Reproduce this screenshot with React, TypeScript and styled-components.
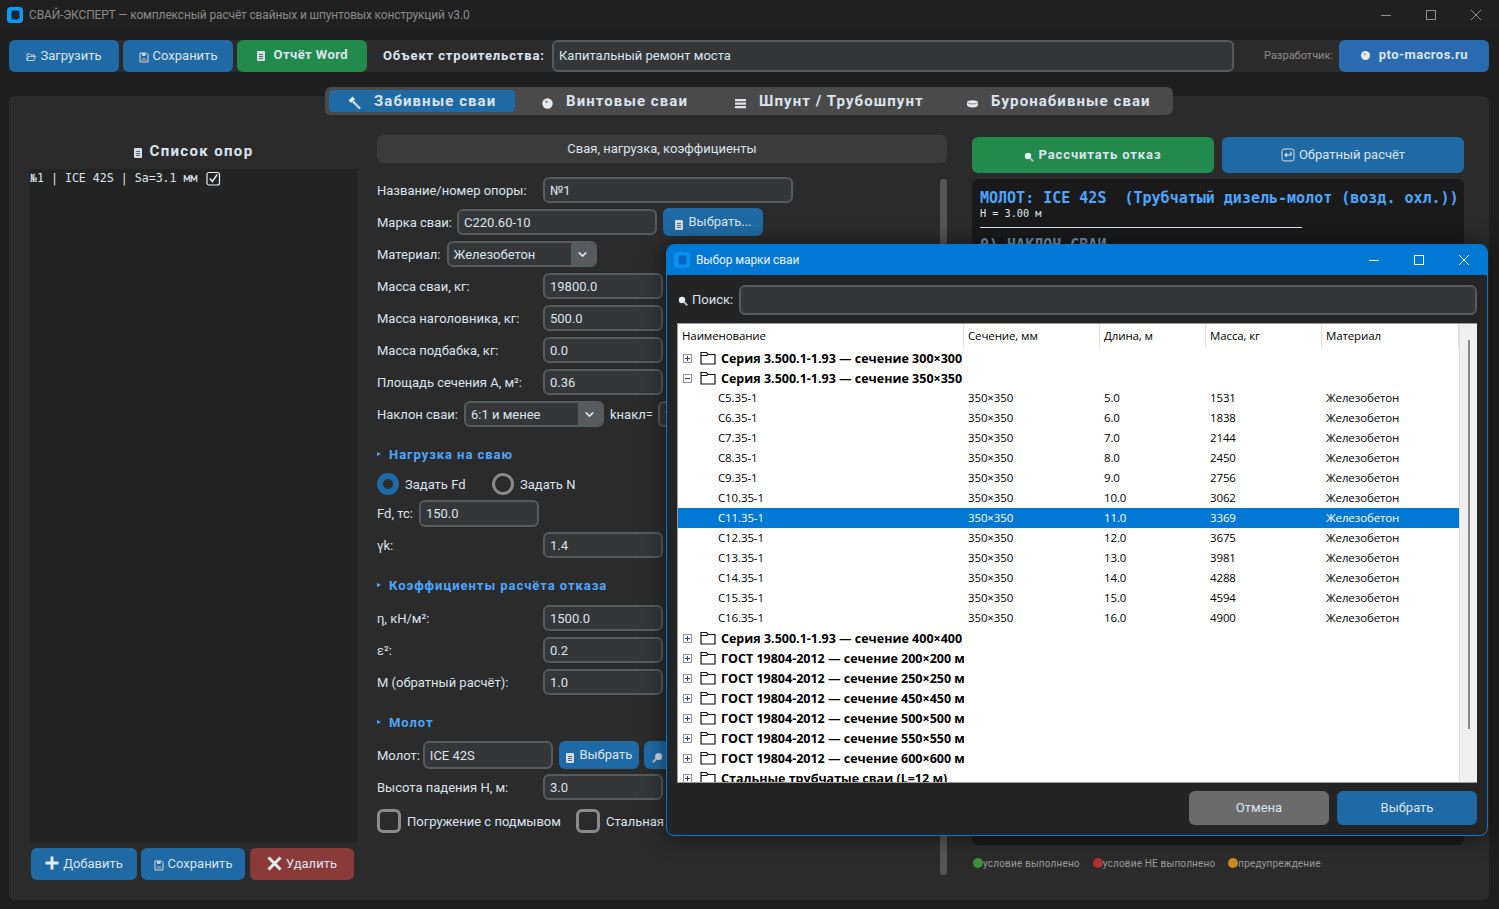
import React from 'react';
import styled, { createGlobalStyle } from 'styled-components';
import { ChevronDown } from 'lucide-react';

const Global = createGlobalStyle`
  html, body { margin: 0; height: 100%; background: #1e1e1e; overflow: hidden; }
  #root { height: 100%; }
  * { box-sizing: border-box; }
`;
const Page = styled.div`
  position: relative; height: 909px; display: flex; flex-direction: column;
  font-family: Roboto, "Liberation Sans", sans-serif; font-size: 13px; color: #dce4ee; background: #1e1e1e;
`;
const TitleBar = styled.div`
  height: 30px; flex: none; background: #202020; display: flex; align-items: center; padding: 0 1px 0 7px;
  color: #8a8a8a; font-size: 12px;
`;
const TitleText = styled.span`flex: 1; margin-left: 6px; white-space: nowrap; letter-spacing: -0.16px; padding-bottom: 1px;`;
const WinBtn = styled.div`
  width: 45px; height: 30px; flex: none; display: flex; align-items: center; justify-content: center;
`;
const Toolbar = styled.div`
  margin: 10px 10px 0 9px; height: 32px; flex: none; background: #2b2b2b; border-radius: 6px;
  display: flex; align-items: center;
`;
const Btn = styled.div<{ $w: number; $bg?: string; $h?: number; $bold?: boolean; $ml?: number; $ls?: number }>`
  width: ${p => p.$w}px; height: ${p => p.$h ?? 32}px; flex: none; margin-left: ${p => p.$ml ?? 0}px;
  background: ${p => p.$bg ?? '#1f6aa5'}; border-radius: 6px; color: #dce4ee;
  display: flex; align-items: center; justify-content: center; gap: 4px; white-space: nowrap; overflow: hidden;
  padding-bottom: ${p => ((p.$h ?? 32) === 28 ? 1 : p.$bold && (p.$h ?? 32) === 32 ? 3 : 2)}px;
  font-weight: ${p => (p.$bold ? 700 : 400)}; letter-spacing: ${p => p.$ls ?? (p.$bold ? 0.45 : 0)}px;
`;
const BoldLabel = styled.span`
  font-weight: 700; letter-spacing: 0.86px; margin-left: 16px; width: 169px; flex: none; white-space: nowrap; padding-bottom: 2px;
`;
const Input = styled.div<{ $w?: number; $h?: number; $flex?: boolean; $pb?: number }>`
  ${p => (p.$flex ? 'flex: 1;' : `width: ${p.$w}px; flex: none;`)}
  height: ${p => p.$h ?? 26}px;
  background: #343638; border: 2px solid #565b5e; border-radius: 6px; padding: 0 5px ${p => p.$pb ?? 0}px;
  display: flex; align-items: center; color: #dce4ee; white-space: nowrap;
`;
const DevLabel = styled.span`
  margin-left: 30px; width: 75px; flex: none; font-size: 11px; color: #8d8d8d; white-space: nowrap; padding-bottom: 1px;
`;
const Pane = styled.div`
  margin: 15px 10px 9px 9px; flex: 1; min-height: 0; position: relative; display: flex; flex-direction: column;
`;
const TabStrip = styled.div`
  align-self: center; width: 848px; height: 28px; margin-bottom: -19px; z-index: 1; flex: none;
  background: #4a4a4a; border-radius: 6px; padding: 3px 4px; display: flex; align-items: center;
`;
const Tab = styled.div<{ $w: number; $on?: boolean; $pl: number }>`
  width: ${p => p.$w}px; height: 22px; flex: none; border-radius: 4px; background: ${p => (p.$on ? '#1f6aa5' : 'transparent')};
  display: flex; align-items: center; padding-left: ${p => p.$pl}px; white-space: nowrap;
  font-size: 15px; font-weight: 700; letter-spacing: 1.08px; color: #dce4ee;
`;
const TabText = styled.span`margin-left: 12px; padding-bottom: 1px;`;
const Body = styled.div`
  flex: 1; min-height: 0; background: #2b2b2b; border-radius: 6px; padding: 39px 25px 20px 20px; display: flex;
`;
const LeftCol = styled.div`width: 328px; flex: none; display: flex; flex-direction: column;`;
const ListTitle = styled.div`
  height: 34px; flex: none; display: flex; align-items: center; justify-content: center; gap: 7px; padding-bottom: 2px;
  font-size: 15px; font-weight: 700; letter-spacing: 1.35px; color: #dce4ee;
`;
const OpList = styled.div`
  flex: 1; min-height: 0; background: #242424; padding: 0 1px; color: #dce4ee;
  font-family: "DejaVu Sans Mono", monospace; font-size: 11.6px;
`;
const OpRow = styled.div`height: 18px; display: flex; align-items: center; gap: 1px; white-space: pre;`;
const LeftBtns = styled.div`margin-top: 6px; padding-left: 2px; display: flex; gap: 4px; flex: none;`;
const CenterCol = styled.div`width: 570px; flex: none; margin-left: 20px; display: flex; flex-direction: column; min-height: 0;`;
const SecHeader = styled.div`
  height: 28px; flex: none; background: #3b3b3b; border-radius: 6px; display: flex; align-items: center; justify-content: center; padding-bottom: 2px;
`;
const FormWrap = styled.div`flex: 1; min-height: 0; display: flex;`;
const FormBody = styled.div`flex: 1; min-width: 0; overflow: hidden; padding-top: 11px;`;
const ScrollThumb = styled.div`width: 7px; flex: none; margin: 16px 0 5px; background: #555; border-radius: 3px;`;
const Row = styled.div<{ $h?: number; $mt?: number }>`
  height: ${p => p.$h ?? 32}px; margin-top: ${p => p.$mt ?? 0}px; display: flex; align-items: center; white-space: nowrap;
`;
const Label = styled.span<{ $w?: number; $gap?: number; $ml?: number }>`
  flex: none; ${p => (p.$w ? `width: ${p.$w}px;` : `margin-right: ${p.$gap ?? 6}px;`)}
  margin-left: ${p => p.$ml ?? 0}px;
`;
const Select = styled.div<{ $w: number }>`
  width: ${p => p.$w}px; height: 26px; flex: none; background: #343638; border: 2px solid #565b5e; border-radius: 6px;
  display: flex; align-items: center; padding-left: 5px; overflow: hidden;
`;
const SelectText = styled.span`flex: 1;`;
const SelectArrow = styled.span`
  width: 24px; align-self: stretch; background: #565b5e; display: flex; align-items: center; justify-content: center;
`;
const Section = styled.div<{ $mt: number }>`
  height: 24px; margin-top: ${p => p.$mt}px; display: flex; align-items: center; gap: 8px;
  color: #4da6ff; font-weight: 700; letter-spacing: 0.95px;
`;
const Tri = styled.span`
  width: 0; height: 0; border-left: 4px solid #4da6ff; border-top: 2.5px solid transparent; border-bottom: 2.5px solid transparent;
`;
const Radio = styled.span<{ $on?: boolean }>`
  width: 22px; height: 22px; flex: none; border-radius: 50%; margin-right: 6px;
  border: ${p => (p.$on ? '6px solid #1f6aa5' : '3px solid #8a8a8a')};
`;
const RadioText = styled.span`width: 87px; flex: none;`;
const Check = styled.span`
  width: 24px; height: 24px; flex: none; border: 3px solid #8a8a8a; border-radius: 6px; margin-right: 6px;
`;
const CheckText = styled.span<{ $w?: number }>`${p => (p.$w ? `width: ${p.$w}px; flex: none;` : '')}`;
const RightCol = styled.div`width: 492px; flex: none; margin-left: 25px; display: flex; flex-direction: column; min-height: 0;`;
const RightBtns = styled.div`margin-top: 2px; display: flex; justify-content: space-between; flex: none;`;
const Output = styled.div`
  margin-top: 6px; height: 666px; flex: none; background: #1a1a1a; border-radius: 6px; padding: 10px 8px;
  font-family: "DejaVu Sans Mono", monospace; overflow: hidden; white-space: pre;
`;
const OutHead = styled.div`font-size: 15px; line-height: 18px; color: #4da6ff; font-weight: 700;`;
const OutSmall = styled.div`font-size: 10.2px; line-height: 13px; color: #dce4ee;`;
const OutRule = styled.div`width: 322px; height: 1px; background: #dce4ee; margin: 7px 0 9px;`;
const OutSub = styled.div`font-size: 15px; line-height: 16px; color: #6f93b5; font-weight: 700;`;
const Legend = styled.div`margin-top: 12px; height: 12px; display: flex; align-items: center; font-size: 10px; color: #9a9a9a; letter-spacing: 0.17px; white-space: nowrap;`;
const Dot = styled.span<{ $c: string; $ml?: number }>`width: 10px; height: 10px; border-radius: 50%; background: ${p => p.$c}; flex: none; margin-left: ${p => p.$ml ?? 0}px;`;

const Dialog = styled.div`
  position: absolute; left: 666px; top: 244px; width: 822px; height: 592px; z-index: 5;
  background: #242424; border: 1px solid #0078d4; border-radius: 8px; display: flex; flex-direction: column;
  box-shadow: 0 0 22px rgba(0,0,0,.5); overflow: hidden;
`;
const DlgTitle = styled.div`
  height: 30px; flex: none; background: #0078d4; display: flex; align-items: center; padding-left: 7px;
  color: #e8f2fb; font-size: 12px;
`;
const DlgTitleText = styled.span`flex: 1; margin-left: 6px; letter-spacing: -0.12px;`;
const DlgControls = styled.div`display: flex; padding-right: 1px;`;
const SearchRow = styled.div`height: 30px; margin: 10px 10px 0 10px; display: flex; align-items: center; flex: none;`;
const SearchLabel = styled.span`width: 62px; flex: none; padding: 0 0 2px 1px; display: flex; align-items: center; gap: 4px; color: #dce4ee;`;
const Tree = styled.div`
  height: 460px; margin: 8px 10px 0 10px; flex: none; background: #fff; border: 1px solid #9a9a9a; border-right: 0;
  display: flex; overflow: hidden;
`;
const TreeInner = styled.div`flex: 1; min-width: 0; overflow: hidden; font-family: "Open Sans", "Noto Sans", sans-serif; font-size: 11.5px; color: #000; letter-spacing: -0.12px;`;
const TreeHead = styled.div`height: 24px; display: grid; grid-template-columns: 286px 136px 106px 116px 1fr;`;
const HeadCell = styled.div`
  padding: 0 0 2px 4px; display: flex; align-items: center; border-right: 1px solid #e2e2e2; white-space: nowrap; overflow: hidden;
`;
const TreeRow = styled.div<{ $sel?: boolean }>`
  height: 20px; display: grid; grid-template-columns: 286px 136px 106px 116px 1fr;
  background: ${p => (p.$sel ? '#0078d4' : 'transparent')}; color: ${p => (p.$sel ? '#fff' : '#000')};
`;
const Cell = styled.div`padding: 0 0 2px 4px; display: flex; align-items: center; white-space: nowrap; overflow: hidden;`;
const NameCell = styled.div`padding: 0 0 2px 40px; display: flex; align-items: center; white-space: nowrap; overflow: hidden;`;
const GroupRow = styled.div`height: 20px; width: 286px; padding-left: 5px; display: flex; align-items: center; overflow: hidden; white-space: nowrap; font-weight: 700;`;
const GroupText = styled.span`margin-left: 5px; font-size: 12.5px; letter-spacing: 0;`;
const TreeScroll = styled.div`width: 18px; flex: none; background: #f0f0f0; border-left: 1px solid #ddd; display: flex; justify-content: center; padding: 16px 0 53px;`;
const TreeThumb = styled.div`width: 2px; background: #8a8a8a; margin-left: 1px;`;
const DlgBtns = styled.div`margin: 8px 10px 0 0; display: flex; justify-content: flex-end; gap: 8px; flex: none;`;

const Ico = styled.svg<{ $dy?: number }>`flex: none; position: relative; top: ${p => p.$dy ?? 2}px;`;
const FILL = '#d5dbe2';
const DIM = '#7d8b98';

const WinControls = ({ c }: { c: string }) => (
  <>
    <WinBtn><svg width="12" height="12" viewBox="0 0 12 12"><path d="M1 6.5h10" stroke={c} strokeWidth="1" /></svg></WinBtn>
    <WinBtn><svg width="12" height="12" viewBox="0 0 12 12"><rect x="1.5" y="1.5" width="9" height="9" fill="none" stroke={c} strokeWidth="1" /></svg></WinBtn>
    <WinBtn><svg width="12" height="12" viewBox="0 0 12 12"><path d="M1 1l10 10M11 1L1 11" stroke={c} strokeWidth="1" /></svg></WinBtn>
  </>
);
const Logo = ({ bg, fg }: { bg: string; fg: string }) => (
  <svg width="16" height="16" viewBox="0 0 16 16" style={{ flex: 'none' }}><rect width="16" height="16" rx="3.5" fill={bg} /><rect x="4.5" y="3.5" width="8" height="9" rx="1.5" fill={fg} /></svg>
);
const FolderSmall = () => (
  <Ico width="10" height="10" viewBox="0 0 10 10"><path d="M1 8.5V1.8h3l1 1.2h3.5v1.4M1 8.5l1.4-4.1H9.4L8 8.5z" fill="none" stroke={FILL} strokeWidth="0.9" /></Ico>
);
const Floppy = () => (
  <Ico width="10" height="11" viewBox="0 0 10 11"><path d="M1 1h6.5L9 2.5V10H1z" fill="none" stroke={FILL} strokeWidth="1" /><rect x="3" y="1.2" width="3.6" height="2.6" fill={FILL} /><rect x="2.8" y="6" width="4.4" height="3.6" fill={DIM} /></Ico>
);
const Sheet = ({ dy = 3 }: { dy?: number }) => (
  <Ico width="10" height="12" viewBox="0 0 10 12" $dy={dy}><rect x="1" y="1" width="8" height="10" rx="1" fill={FILL} /><path d="M3 4.5h4M3 6.5h4M3 8.5h4" stroke="#4e6a7a" strokeWidth="1" /></Ico>
);
const Hammer = () => (
  <Ico width="15" height="15" viewBox="0 0 15 15" $dy={1}><path d="M1.5 5.5L5.5 1.5L8 4L4 8z" fill="#e6ebf0" /><path d="M6 6.5L13 13.5" stroke="#e6ebf0" strokeWidth="2.2" /><path d="M7 7.5L12 12.5" stroke="#8fa9bd" strokeWidth="0.8" /></Ico>
);
const Ball = () => (
  <Ico width="13" height="13" viewBox="0 0 13 13"><circle cx="6.5" cy="6.5" r="5.2" fill="#e6ebf0" /><path d="M4 3.5l3 1-1.5 2z" fill="#777" /></Ico>
);
const Stack = () => (
  <Ico width="13" height="13" viewBox="0 0 13 13"><path d="M1 2h11v2.300H1zM1 5.500h11v2.300H1zM1 9h11v2.300H1z" fill="#dfe4e9" /></Ico>
);
const Pot = () => (
  <Ico width="13" height="13" viewBox="0 0 13 13"><path d="M1 5.500c0-1.300 2.400-2.200 5.500-2.200S12 4.200 12 5.500V8c0 1.400-2.400 2.500-5.500 2.500S1 9.400 1 8z" fill="#e6ebf0" /><path d="M1.500 5.600c1 1 3 1.300 5 1.300s4-.3 5-1.300" stroke="#555" strokeWidth=".7" fill="none" /></Ico>
);
const Lens = ({ size = 10, dy = 3 }: { size?: number; dy?: number }) => (
  <Ico width={size} height={size} viewBox="0 0 10 10" $dy={dy}><circle cx="4" cy="4" r="3.2" fill="#e6ebf0" /><path d="M6 6l3.300 3.300" stroke="#b9c2c9" strokeWidth="1.800" /></Ico>
);
const LensMirror = () => (
  <Ico width="11" height="11" viewBox="0 0 10 10" $dy={3}><circle cx="6" cy="4" r="3.2" fill="#cfd6dd" /><path d="M4 6L.8 9.300" stroke="#b9c2c9" strokeWidth="1.800" /></Ico>
);
const DevBall = () => (
  <Ico width="11" height="11" viewBox="0 0 11 11" $dy={1}><circle cx="5.500" cy="5.500" r="4.500" fill="#e6ebf0" /><path d="M3.500 3l2.500 1-1 2z" fill="#7f94ab" /></Ico>
);
const Return = () => (
  <Ico width="14" height="14" viewBox="0 0 14 14" $dy={1}><rect x="1" y="1" width="12" height="12" rx="2.500" fill="none" stroke="#dce4ee" strokeWidth="1" /><path d="M10 3.800V7H4.500M6 5.200L4 7l2 1.800" fill="none" stroke="#dce4ee" strokeWidth="1.200" /></Ico>
);
const PlusIco = () => (
  <svg width="14" height="14" viewBox="0 0 14 14" style={{ flex: 'none' }}><path d="M7 .5v13M.5 7h13" stroke="#e6ebf0" strokeWidth="3" /></svg>
);
const CrossIco = () => (
  <svg width="15" height="15" viewBox="0 0 15 15" style={{ flex: 'none' }}><path d="M1.500 1.500l12 12M13.500 1.500l-12 12" stroke="#e6ebf0" strokeWidth="3" /></svg>
);
const CheckBoxIco = () => (
  <svg width="15" height="15" viewBox="0 0 15 15" style={{ flex: 'none' }}><rect x="1" y="1.500" width="12.500" height="12.500" rx="2" fill="none" stroke="#e6ebf0" strokeWidth="1.200" /><path d="M3.800 7.500l2.500 3 4.900-7" fill="none" stroke="#e6ebf0" strokeWidth="1.400" /></svg>
);
const Expander = ({ open }: { open?: boolean }) => (
  <svg width="9" height="9" viewBox="0 0 9 9" style={{ flex: 'none' }}>
    <rect x="0.5" y="0.5" width="8" height="8" fill="#fff" stroke="#8f8f9f" />
    <path d={open ? 'M2 4.500h5' : 'M2 4.500h5M4.500 2v5'} stroke="#1c3f8f" strokeWidth="1" />
  </svg>
);
const FolderIco = () => (
  <svg width="16" height="14" viewBox="0 0 16 14" style={{ flex: 'none', marginLeft: 8 }}>
    <path d="M1 13V1.500h5.500L8 3.500h7V13z M1 4.500h5.500L8 3.500" fill="none" stroke="#111" strokeWidth="1.200" />
  </svg>
);

const groupsA = ['Серия 3.500.1-1.93 — сечение 300×300 мм', 'Серия 3.500.1-1.93 — сечение 350×350 мм'];
const items = [
  ['С5.35-1', '5.0', '1531'], ['С6.35-1', '6.0', '1838'], ['С7.35-1', '7.0', '2144'], ['С8.35-1', '8.0', '2450'],
  ['С9.35-1', '9.0', '2756'], ['С10.35-1', '10.0', '3062'], ['С11.35-1', '11.0', '3369'], ['С12.35-1', '12.0', '3675'],
  ['С13.35-1', '13.0', '3981'], ['С14.35-1', '14.0', '4288'], ['С15.35-1', '15.0', '4594'], ['С16.35-1', '16.0', '4900'],
];
const groupsB = [
  'Серия 3.500.1-1.93 — сечение 400×400 мм', 'ГОСТ 19804-2012 — сечение 200×200 мм', 'ГОСТ 19804-2012 — сечение 250×250 мм',
  'ГОСТ 19804-2012 — сечение 450×450 мм', 'ГОСТ 19804-2012 — сечение 500×500 мм', 'ГОСТ 19804-2012 — сечение 550×550 мм',
  'ГОСТ 19804-2012 — сечение 600×600 мм', 'Стальные трубчатые сваи (L=12 м)',
];
const Group = ({ t, open }: { t: string; open?: boolean }) => (
  <GroupRow><Expander open={open} /><FolderIco /><GroupText>{t}</GroupText></GroupRow>
);
const Arrow = () => (
  <SelectArrow><ChevronDown size={13} strokeWidth={3} color="#dce4ee" /></SelectArrow>
);

export default function App() {
  return (
    <Page>
      <Global />
      <TitleBar>
        <Logo bg="#0a9bf5" fg="#16283a" />
        <TitleText>СВАЙ-ЭКСПЕРТ — комплексный расчёт свайных и шпунтовых конструкций v3.0</TitleText>
        <WinControls c="#8f8f8f" />
      </TitleBar>
      <Toolbar>
        <Btn $w={110}><FolderSmall />Загрузить</Btn>
        <Btn $w={110} $ml={4}><Floppy />Сохранить</Btn>
        <Btn $w={130} $ml={4} $bg="#218a4c" $bold><Sheet dy={1} />&nbsp;Отчёт Word</Btn>
        <BoldLabel>Объект строительства:</BoldLabel>
        <Input $w={682} $h={32} $pb={1}>Капитальный ремонт моста</Input>
        <DevLabel>Разработчик:</DevLabel>
        <Btn $w={150} $bg="#2a6bb0" $bold><DevBall />&nbsp;pto-macros.ru</Btn>
      </Toolbar>
      <Pane>
        <TabStrip>
          <Tab $w={186} $on $pl={18}><Hammer /><TabText>Забивные сваи</TabText></Tab>
          <Tab $w={201} $pl={26}><Ball /><TabText>Винтовые сваи</TabText></Tab>
          <Tab $w={216} $pl={18}><Stack /><TabText>Шпунт / Трубошпунт</TabText></Tab>
          <Tab $w={231} $pl={34}><Pot /><TabText>Буронабивные сваи</TabText></Tab>
        </TabStrip>
        <Body>
          <LeftCol>
            <ListTitle><Sheet dy={2} />Список опор</ListTitle>
            <OpList>
              <OpRow>№1 | ICE 42S | Sa=3.1 мм <CheckBoxIco /></OpRow>
            </OpList>
            <LeftBtns>
              <Btn $w={106}><PlusIco />Добавить</Btn>
              <Btn $w={104}><Floppy />Сохранить</Btn>
              <Btn $w={104} $ml={1} $bg="#8b3a3a"><CrossIco />Удалить</Btn>
            </LeftBtns>
          </LeftCol>
          <CenterCol>
            <SecHeader>Свая, нагрузка, коэффициенты</SecHeader>
            <FormWrap>
              <FormBody>
                <Row><Label $w={166}>Название/номер опоры:</Label><Input $w={250}>№1</Input></Row>
                <Row><Label $gap={5}>Марка сваи:</Label><Input $w={200}>С220.60-10</Input><Btn $w={100} $h={28} $ml={6}><Sheet />Выбрать...</Btn></Row>
                <Row><Label>Материал:</Label><Select $w={150}><SelectText>Железобетон</SelectText><Arrow /></Select></Row>
                <Row><Label $w={166}>Масса сваи, кг:</Label><Input $w={120}>19800.0</Input></Row>
                <Row><Label $w={166}>Масса наголовника, кг:</Label><Input $w={120}>500.0</Input></Row>
                <Row><Label $w={166}>Масса подбабка, кг:</Label><Input $w={120}>0.0</Input></Row>
                <Row><Label $w={166}>Площадь сечения А, м²:</Label><Input $w={120}>0.36</Input></Row>
                <Row><Label>Наклон сваи:</Label><Select $w={140}><SelectText>6:1 и менее</SelectText><Arrow /></Select><Label $ml={6} $gap={5}>kнакл=</Label><Input $w={60}>1.0</Input></Row>
                <Section $mt={12}><Tri />Нагрузка на сваю</Section>
                <Row $h={36}><Radio $on /><RadioText>Задать Fd</RadioText><Radio /><span>Задать N</span></Row>
                <Row $h={21} $mt={1}><Label>Fd, тс:</Label><Input $w={120} $h={27}>150.0</Input></Row>
                <Row $mt={5}><Label $w={166}>γk:</Label><Input $w={120}>1.4</Input></Row>
                <Section $mt={12}><Tri />Коэффициенты расчёта отказа</Section>
                <Row $mt={5}><Label $w={166}>η, кН/м²:</Label><Input $w={120}>1500.0</Input></Row>
                <Row><Label $w={166}>ε²:</Label><Input $w={120}>0.2</Input></Row>
                <Row><Label $w={166}>М (обратный расчёт):</Label><Input $w={120}>1.0</Input></Row>
                <Section $mt={12}><Tri />Молот</Section>
                <Row $mt={5}><Label $gap={3}>Молот:</Label><Input $w={130} $h={28}>ICE 42S</Input><Btn $w={80} $h={28} $ml={6}><Sheet />Выбрать</Btn><Btn $w={28} $h={28} $ml={5}><LensMirror /></Btn></Row>
                <Row><Label $w={166}>Высота падения Н, м:</Label><Input $w={120}>3.0</Input></Row>
                <Row $mt={2}><Check /><CheckText $w={169}>Погружение с подмывом</CheckText><Check /><CheckText>Стальная свая</CheckText></Row>
              </FormBody>
              <ScrollThumb />
            </FormWrap>
          </CenterCol>
          <RightCol>
            <RightBtns>
              <Btn $w={242} $h={36} $bg="#218a4c" $bold $ls={0.9}><Lens />Рассчитать отказ</Btn>
              <Btn $w={242} $h={36}><Return />Обратный расчёт</Btn>
            </RightBtns>
            <Output>
              <OutHead>{'МОЛОТ: ICE 42S  (Трубчатый дизель-молот (возд. охл.))'}</OutHead>
              <OutSmall>H = 3.00 м</OutSmall>
              <OutRule />
              <OutSub>0) НАКЛОН СВАИ</OutSub>
            </Output>
            <Legend>
              <Dot $c="#3f8f3f" $ml={1} />условие выполнено<Dot $c="#b03030" $ml={13} />условие НЕ выполнено<Dot $c="#c98a20" $ml={13} />предупреждение
            </Legend>
          </RightCol>
        </Body>
      </Pane>
      <Dialog>
        <DlgTitle>
          <Logo bg="#0a90f0" fg="#0068c0" />
          <DlgTitleText>Выбор марки сваи</DlgTitleText>
          <DlgControls><WinControls c="#fff" /></DlgControls>
        </DlgTitle>
        <SearchRow>
          <SearchLabel><Lens size={10} dy={2} />Поиск:</SearchLabel>
          <Input $flex $h={30} />
        </SearchRow>
        <Tree>
          <TreeInner>
            <TreeHead>
              <HeadCell>Наименование</HeadCell><HeadCell>Сечение, мм</HeadCell><HeadCell>Длина, м</HeadCell><HeadCell>Масса, кг</HeadCell><HeadCell>Материал</HeadCell>
            </TreeHead>
            <Group t={groupsA[0]} />
            <Group t={groupsA[1]} open />
            {items.map(it => (
              <TreeRow key={it[0]} $sel={it[0] === 'С11.35-1'}>
                <NameCell>{it[0]}</NameCell><Cell>350×350</Cell><Cell>{it[1]}</Cell><Cell>{it[2]}</Cell><Cell>Железобетон</Cell>
              </TreeRow>
            ))}
            {groupsB.map(g => <Group key={g} t={g} />)}
          </TreeInner>
          <TreeScroll><TreeThumb /></TreeScroll>
        </Tree>
        <DlgBtns>
          <Btn $w={140} $h={34} $bg="#6b6b6b">Отмена</Btn>
          <Btn $w={140} $h={34}>Выбрать</Btn>
        </DlgBtns>
      </Dialog>
    </Page>
  );
}
